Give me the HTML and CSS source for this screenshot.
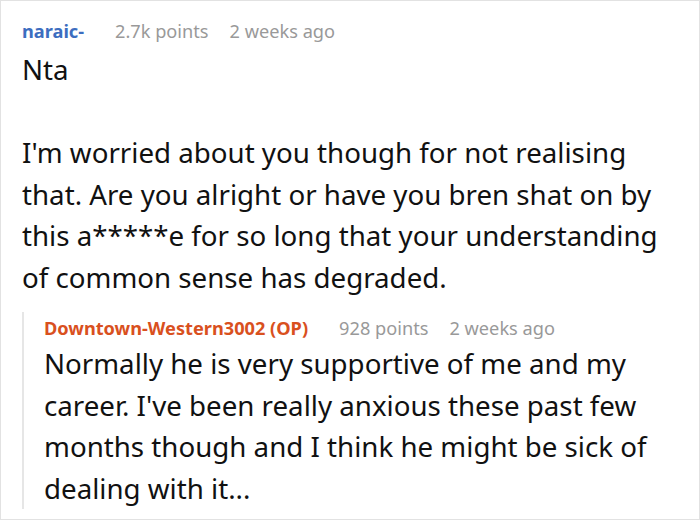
FILE: index.html
```html
<!DOCTYPE html>
<html>
<head>
<meta charset="utf-8">
<link rel="stylesheet" href="styles.css">
</head>
<body>
<div class="frame">
  <div class="comment">
    <div class="meta"><span class="user user-blue">naraic-</span><span class="points">2.7k points</span><span class="time">2 weeks ago</span></div>
    <div class="body">
      <p>Nta</p>
      <p>I'm worried about you though for not realising that. Are you alright or have you bren shat on by this a*****e for so long that your understanding of common sense has degraded.</p>
    </div>
    <div class="reply">
      <div class="meta"><span class="user user-op">Downtown-Western3002 (OP)</span><span class="points">928 points</span><span class="time">2 weeks ago</span></div>
      <div class="body">
        <p>Normally he is very supportive of me and my career. I've been really anxious these past few months though and I think he might be sick of dealing with it...</p>
      </div>
    </div>
  </div>
</div>
</body>
</html>
```
FILE: styles.css
```css
html, body {
  margin: 0;
  padding: 0;
  background: #fff;
}
.frame {
  width: 700px;
  height: 520px;
  box-sizing: border-box;
  border: 1px solid #e2e2e2;
  overflow: hidden;
  font-family: "Noto Sans", sans-serif;
  color: #111;
}
.comment {
  padding: 18px 16px 0 21px;
}
.meta {
  font-size: 18.2px;
  line-height: 24px;
  color: #999;
  white-space: nowrap;
}
.user {
  font-weight: bold;
}
.user-blue { color: #3c6dbf; }
.user-op { color: #d9501e; }
.points { margin-left: 31px; }
.time { margin-left: 21px; }
.body {
  font-size: 27.7px;
  line-height: 41.5px;
}
.body p {
  margin: 0 0 41.5px 0;
}
.body p:last-child {
  margin-bottom: 0;
}
.comment > .body {
  margin-top: 6px;
}
.reply {
  margin-top: 14px;
  border-left: 2px solid #e6e6e6;
  padding-left: 20px;
  padding-top: 4px;
  padding-bottom: 0;
}
.reply .body {
  margin-top: 3px;
}
```
